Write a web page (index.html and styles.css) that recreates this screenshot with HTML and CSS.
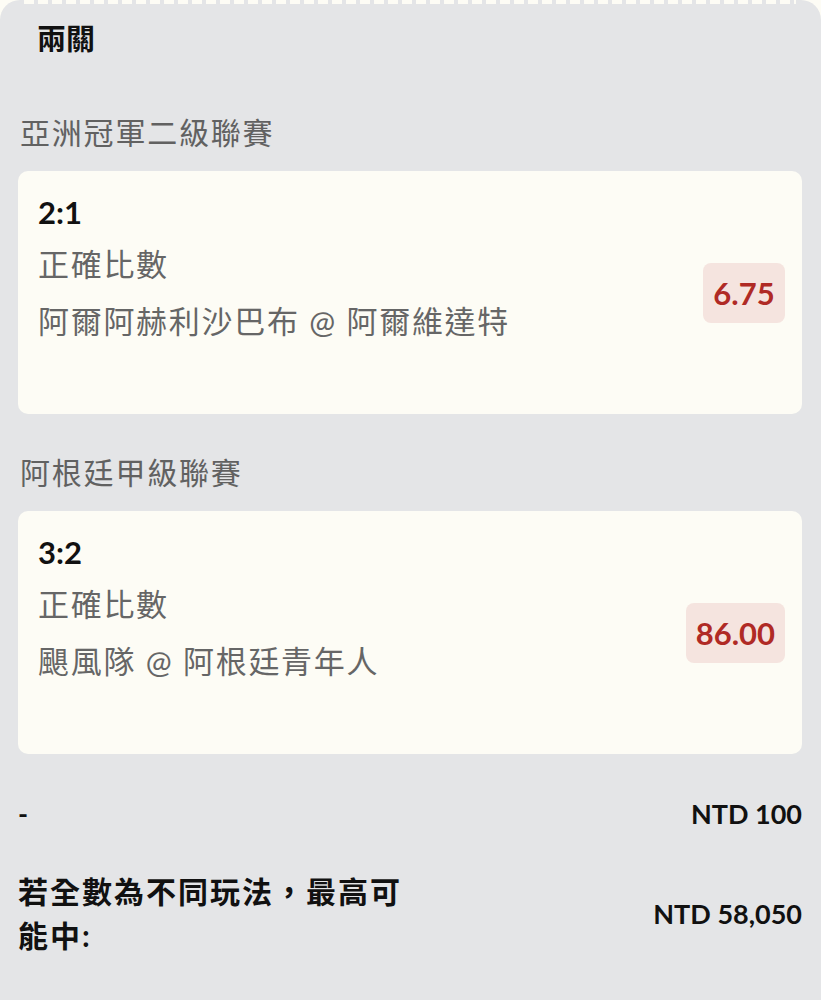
FILE: index.html
```html
<!DOCTYPE html>
<html lang="zh-Hant">
<head>
<meta charset="utf-8">
<link rel="stylesheet" href="styles.css">
</head>
<body>
<div class="sheet">
  <div class="perf"></div>
  <h1 class="title">兩關</h1>

  <div class="league">亞洲冠軍二級聯賽</div>
  <div class="card">
    <div class="info">
      <div class="score">2:1</div>
      <div class="line">正確比數</div>
      <div class="line">阿爾阿赫利沙巴布 @ 阿爾維達特</div>
    </div>
    <div class="odds">6.75</div>
  </div>

  <div class="league">阿根廷甲級聯賽</div>
  <div class="card">
    <div class="info">
      <div class="score">3:2</div>
      <div class="line">正確比數</div>
      <div class="line">颶風隊 @ 阿根廷青年人</div>
    </div>
    <div class="odds">86.00</div>
  </div>

  <div class="row stake">
    <div class="label">-</div>
    <div class="amount">NTD 100</div>
  </div>
  <div class="row payout">
    <div class="label wrap">若全數為不同玩法，最高可能中:</div>
    <div class="amount">NTD 58,050</div>
  </div>
</div>
</body>
</html>
```
FILE: styles.css
```css
html, body {
  margin: 0;
  padding: 0;
  background: #fdfcf5;
}
body {
  font-family: Lato, "Noto Sans CJK TC", sans-serif;
  color: #111;
}
.sheet {
  background: #e4e5e7;
  border-radius: 20px 20px 0 0;
  min-height: 1000px;
  padding: 0 19px 0 18px;
  box-sizing: border-box;
}
.perf {
  height: 4px;
  margin: 0 6px;
  background: repeating-linear-gradient(90deg, #fdfcf5 0 10px, transparent 10px 14px);
}
.title {
  margin: 0;
  padding: 16px 0 0 19px;
  font-size: 29px;
  line-height: 38px;
  font-weight: 700;
}
.league {
  padding-left: 2px;
  font-size: 30px;
  line-height: 42px;
  color: #616161;
  letter-spacing: 1.8px;
}
.title + .league {
  margin-top: 53px;
}
.card + .league {
  margin-top: 37px;
}
.card {
  margin-top: 18px;
  background: #fdfcf5;
  border-radius: 10px;
  height: 243px;
  box-sizing: border-box;
  padding: 18px 17px 0 20px;
  display: flex;
  align-items: flex-start;
  justify-content: space-between;
}
.card:last-of-type {
  margin-top: 19px;
}
.score {
  font-size: 31px;
  font-weight: 700;
  line-height: 47px;
}
.line {
  font-size: 31px;
  line-height: 57px;
  color: #666;
  letter-spacing: 1.7px;
}
.odds {
  margin-top: 74px;
  min-width: 62px;
  padding: 0 10px;
  height: 60px;
  border-radius: 8px;
  background: #f5e4df;
  color: #b02a25;
  font-size: 31px;
  font-weight: 700;
  display: flex;
  align-items: center;
  justify-content: center;
}
.row {
  display: flex;
  justify-content: space-between;
  align-items: center;
  font-weight: 700;
}
.label {
  font-size: 27px;
}
.stake {
  margin-top: 43px;
  line-height: 34px;
}
.payout {
  margin-top: 38px;
}
.label.wrap {
  width: 400px;
  font-size: 30px;
  line-height: 44px;
  letter-spacing: 2px;
}
.amount {
  font-size: 27px;
}
```
